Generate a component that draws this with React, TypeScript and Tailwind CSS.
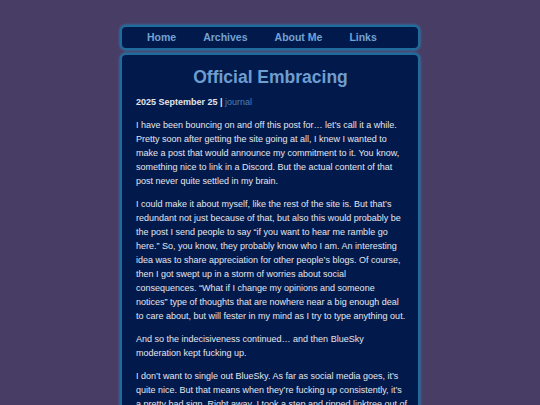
import React from "react";

const paras: string[][] = [
  [
    "I have been bouncing on and off this post for… let’s call it a while.",
    "Pretty soon after getting the site going at all, I knew I wanted to",
    "make a post that would announce my commitment to it. You know,",
    "something nice to link in a Discord. But the actual content of that",
    "post never quite settled in my brain.",
  ],
  [
    "I could make it about myself, like the rest of the site is. But that’s",
    "redundant not just because of that, but also this would probably be",
    "the post I send people to say “if you want to hear me ramble go",
    "here.” So, you know, they probably know who I am. An interesting",
    "idea was to share appreciation for other people’s blogs. Of course,",
    "then I got swept up in a storm of worries about social",
    "consequences. “What if I change my opinions and someone",
    "notices” type of thoughts that are nowhere near a big enough deal",
    "to care about, but will fester in my mind as I try to type anything out.",
  ],
  ["And so the indecisiveness continued… and then BlueSky", "moderation kept fucking up."],
  [
    "I don’t want to single out BlueSky. As far as social media goes, it’s",
    "quite nice. But that means when they’re fucking up consistently, it’s",
    "a pretty bad sign. Right away, I took a step and ripped linktree out of",
    "my profile.",
  ],
];

export default function App() {
  return (
    <div
      className="min-h-[405px] h-[405px] overflow-hidden bg-[#483d64] pt-[25px]"
      style={{ fontFamily: '"Liberation Sans", Arial, sans-serif' }}
    >
      <div className="mx-auto w-[300px] flex flex-col gap-[3px]">
        <nav className="h-[25px] rounded-[6px] border-2 border-[#1e6c9c] bg-[#021a4b] shadow-[0_0_3px_#2b8cc4] flex items-center pl-[25px] gap-[27px] text-[10.5px] font-bold text-[#72a2d4]">
          <span>Home</span>
          <span>Archives</span>
          <span>About Me</span>
          <span>Links</span>
        </nav>
        <main className="rounded-[6px] border-2 border-[#1e6c9c] bg-[#021a4b] shadow-[0_0_3px_#2b8cc4] pl-[14px] pr-[13px] pt-[11px] pb-6 text-[#e2e4ea]">
          <h1 className="text-center text-[17.5px] font-bold leading-[22px] text-[#6e9dd0]">
            Official Embracing
          </h1>
          <div className="mt-[7px] text-[9px] leading-[14px]">
            <span className="font-bold">2025 September 25 | </span>
            <span className="text-[#4d7db3]">journal</span>
          </div>
          <div className="mt-[9px] text-[9px] leading-[14px] text-[#e4e6ee]">
            {paras.map((lines, i) => (
              <p key={i} className="mb-[9px]">
                {lines.map((l, j) => (
                  <span key={j} className="block whitespace-nowrap">
                    {l}
                  </span>
                ))}
              </p>
            ))}
          </div>
        </main>
      </div>
    </div>
  );
}
